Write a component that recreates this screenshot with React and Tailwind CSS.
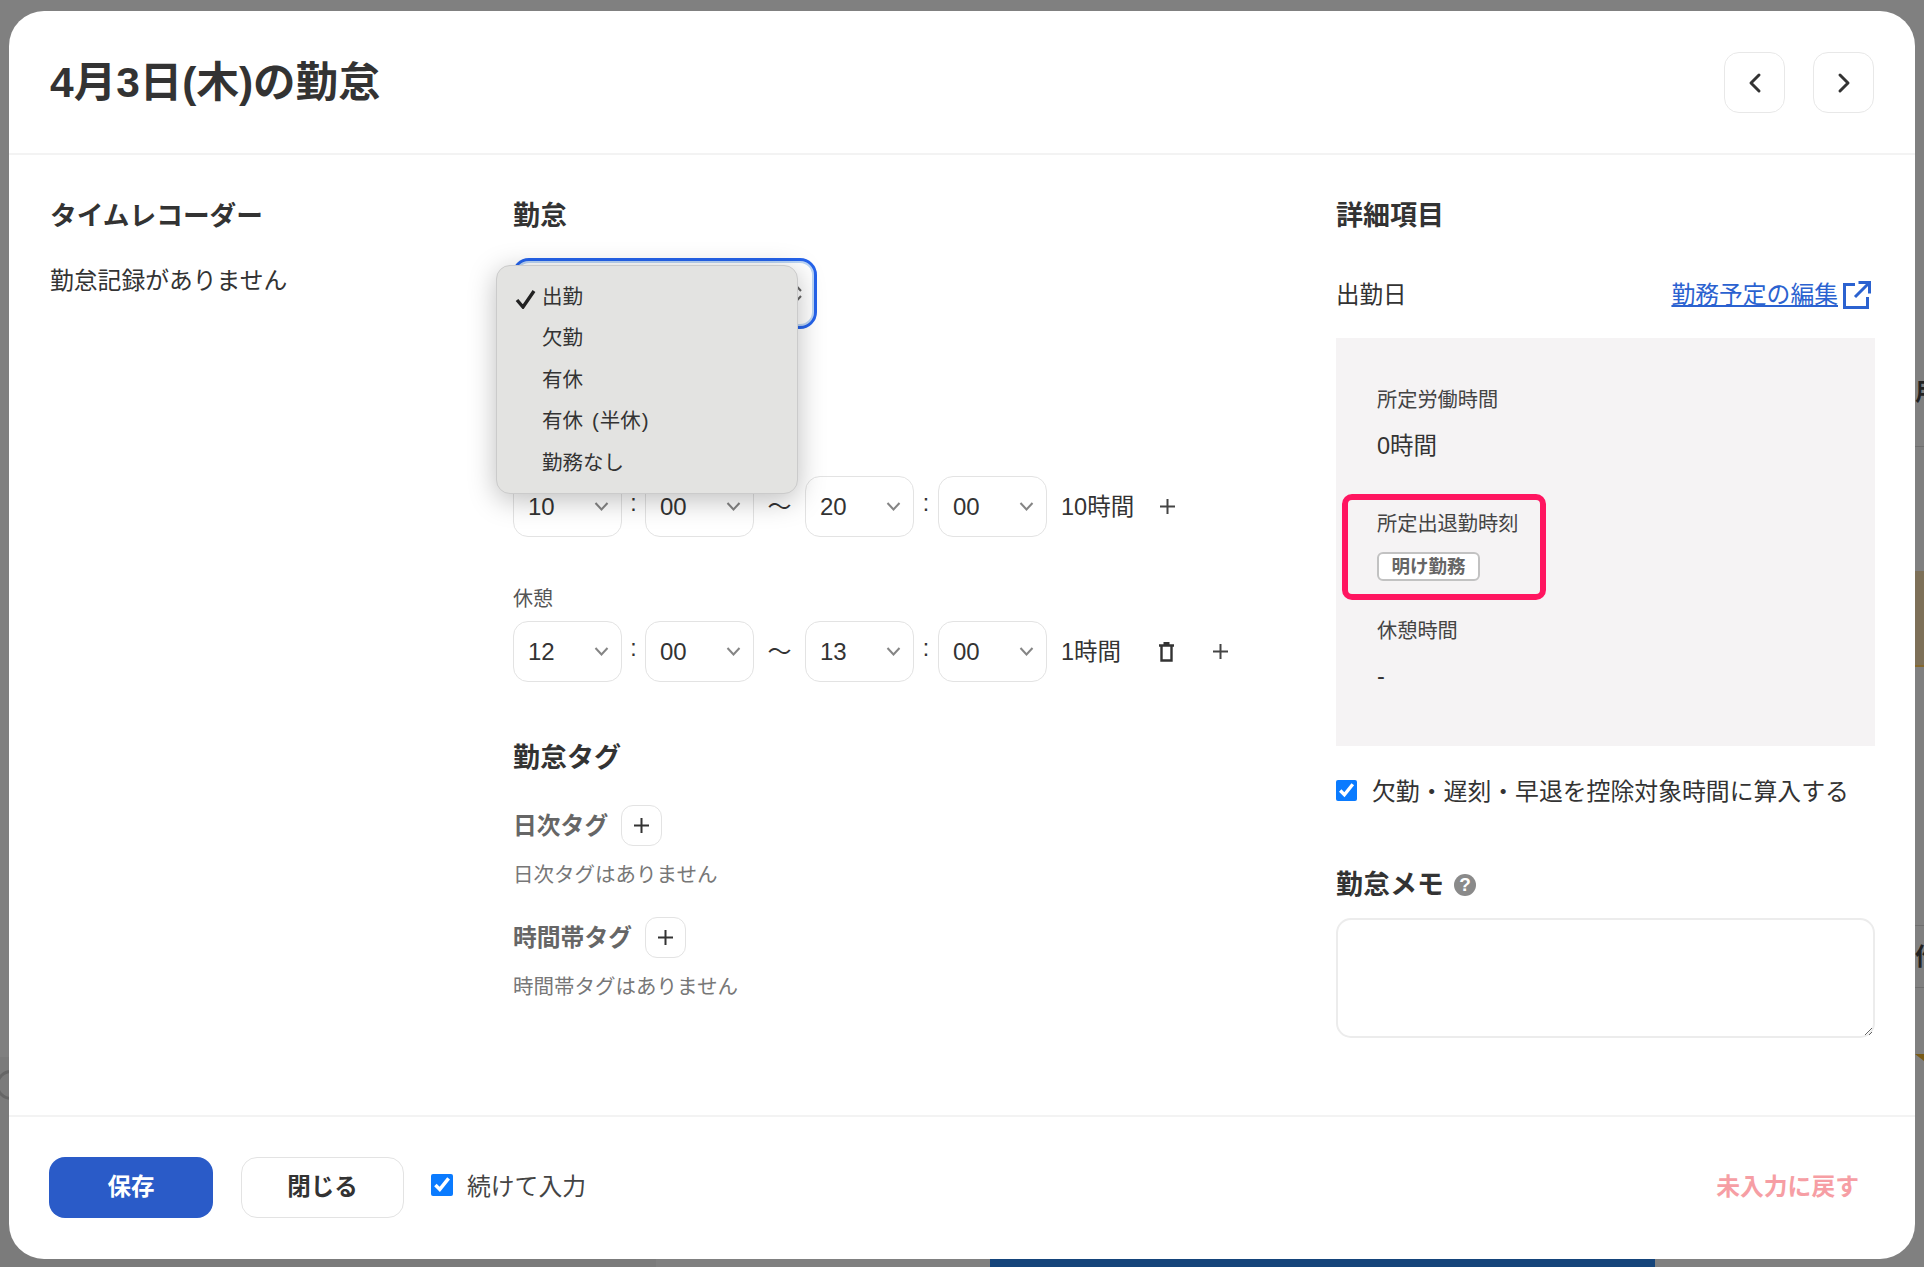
import React from "react";

const FONT = "[font-family:'Liberation_Sans','Noto_Sans_CJK_JP',sans-serif]";

function Chevron() {
  return (
    <svg width="15" height="11" viewBox="0 0 15 11" fill="none" stroke="#858585" strokeWidth="2">
      <path d="M1.5 2 L7.5 8.5 L13.5 2" />
    </svg>
  );
}

function TimeSelect({ value }) {
  return (
    <div className="flex h-[61px] w-[109px] items-center justify-between rounded-[15px] border border-[#e3e3e3] bg-white pl-[14px] pr-[12px] text-[24px] leading-[32px] text-[#333]">
      <span className="pt-px">{value}</span>
      <Chevron />
    </div>
  );
}

function Colon({ w }) {
  return <span className={`${w} pb-[8px] text-center text-[23px] leading-[32px] text-[#333]`}>:</span>;
}

function Plus({ size = 17, color = "#444" }) {
  return (
    <svg width={size} height={size} viewBox="0 0 17 17" fill="none" stroke={color} strokeWidth="2">
      <path d="M8.5 1v15M1 8.5h15" />
    </svg>
  );
}

function TimeRow({ a, b, c, d, children }) {
  return (
    <div className="flex items-center">
      <TimeSelect value={a} />
      <Colon w="w-[23px]" />
      <TimeSelect value={b} />
      <span className="w-[51px] text-center text-[24px] leading-[32px] text-[#333]">〜</span>
      <TimeSelect value={c} />
      <Colon w="w-[24px]" />
      <TimeSelect value={d} />
      {children}
    </div>
  );
}

function TagRow({ label, text, mt }) {
  return (
    <>
      <div className={`flex items-center gap-[13px] ${mt}`}>
        <span className="text-[23.8px] font-bold leading-[32px] text-[#666]">{label}</span>
        <button className="flex h-[41px] w-[41px] items-center justify-center rounded-[12px] border border-[#e3e3e3] bg-white">
          <Plus size={17} color="#333" />
        </button>
      </div>
      <p className="mt-[15px] text-[20.5px] leading-[28px] text-[#777]">{text}</p>
    </>
  );
}

function Nav({ d }) {
  return (
    <button className="flex h-[61px] w-[61px] items-center justify-center rounded-[15px] border border-[#e8e8e8] bg-white">
      <svg width="16" height="22" viewBox="0 0 16 22" fill="none" stroke="#333" strokeWidth="3" strokeLinecap="round" strokeLinejoin="round">
        <path d={d} />
      </svg>
    </button>
  );
}

function Option({ checked, children }) {
  return (
    <div className="relative flex h-[41.5px] items-center pl-[45px] text-[20.5px] leading-[28px] text-[#333]">
      {checked && (
        <svg className="absolute left-[18px] top-[13px]" width="21" height="20" viewBox="0 0 21 20" fill="none" stroke="#222" strokeWidth="3.4">
          <path d="M2 11 L8 18 L19 2" />
        </svg>
      )}
      {children}
    </div>
  );
}

export default function App() {
  return (
    <div className={`relative h-[1267px] w-[1924px] overflow-hidden bg-[#808080] ${FONT}`}>
      {/* page dimmed behind the dialog */}
      <div className="absolute bottom-0 left-0 h-[210px] w-[656px] bg-[#7b7b7b]" />
      <div className="absolute bottom-0 left-[990px] h-[9px] w-[665px] bg-[#15447a]" />
      <div className="absolute left-[-4px] top-[1070px] h-[30px] w-[30px] rounded-full border-[3px] border-[#666]" />
      <div className="absolute left-[1915px] top-[446px] h-px w-[9px] bg-[#6f6f6f]" />
      <div className="absolute left-[1915px] top-[571px] h-[96px] w-[9px] border-b-2 border-[#86692e] bg-[#7d7058]" />
      <div className="absolute left-[1915px] top-[925px] h-px w-[9px] bg-[#6f6f6f]" />
      <div className="absolute left-[1915px] top-[987px] h-px w-[9px] bg-[#6f6f6f]" />
      <svg className="absolute left-[1915px] top-[1054px]" width="9" height="7" viewBox="0 0 9 7">
        <path d="M0 0H9V7Z" fill="#7a5b16" />
      </svg>
      <div className="absolute left-[1915px] top-[378px] text-[24px] font-bold leading-[28px] text-[#222]">用</div>
      <div className="absolute left-[1915px] top-[943px] text-[24px] font-bold leading-[28px] text-[#222]">作</div>

      <div className="relative ml-[9px] mt-[11px] flex h-[1248px] w-[1906px] flex-col overflow-hidden rounded-[35px] bg-white">
        <header className="flex h-[142px] shrink-0 items-center justify-between px-[41px]">
          <h1 className="mt-px text-[42.5px] font-bold leading-[52px] text-[#333]">4月3日(木)の勤怠</h1>
          <div className="mt-px flex gap-[28px]">
            <Nav d="M12 3 L4 11 L12 19" />
            <Nav d="M4 3 L12 11 L4 19" />
          </div>
        </header>

        <main className="flex flex-1 border-y-2 border-[#f3f3f3] pl-[41px] pr-[40px] pt-[41px]">
          <section className="w-[463px] shrink-0">
            <h2 className="text-[26.7px] font-bold leading-[40px] text-[#333]">タイムレコーダー</h2>
            <p className="mt-[29px] text-[23.8px] leading-[32px] text-[#333]">勤怠記録がありません</p>
          </section>

          <section className="w-[823px] shrink-0">
            <h2 className="text-[27px] font-bold leading-[40px] text-[#333]">勤怠</h2>
            <div className="relative -ml-px mt-[22px] h-[71px] w-[305px]">
              <div className="flex h-full items-center justify-end rounded-[17px] border-[3px] border-[#2563eb] pr-[12px] shadow-[inset_0_0_0_2px_#bcd6f5]">
                <svg width="11" height="19" viewBox="0 0 11 19" fill="none" stroke="#666" strokeWidth="2">
                  <path d="M1 7 L5.5 2 L10 7M1 12 L5.5 17 L10 12" />
                </svg>
              </div>
              <div className="absolute left-[-16px] top-[7px] h-[229px] w-[302px] rounded-[14px] border border-[#cbcbcb] bg-[#e3e3e1] pt-[10px] shadow-[0_6px_28px_rgba(0,0,0,0.26)]">
                <Option checked>出勤</Option>
                <Option>欠勤</Option>
                <Option>有休</Option>
                <Option>
                  有休<span className="ml-[9px] mr-px">(</span>半休<span className="ml-px">)</span>
                </Option>
                <Option>勤務なし</Option>
              </div>
            </div>

            <div className="mt-[147px]">
              <TimeRow a="10" b="00" c="20" d="00">
                <span className="ml-[14px] text-[23.5px] leading-[32px] text-[#333]">10時間</span>
                <span className="ml-[25px]"><Plus size={17} color="#444" /></span>
              </TimeRow>
            </div>

            <p className="mt-[48px] text-[20px] leading-[28px] text-[#555]">休憩</p>
            <div className="mt-[8px]">
              <TimeRow a="12" b="00" c="13" d="00">
                <span className="ml-[14px] text-[23.5px] leading-[32px] text-[#333]">1時間</span>
                <svg className="ml-[37px]" width="17" height="20" viewBox="0 0 17 20" fill="none" stroke="#333" strokeWidth="2.4">
                  <path d="M1 3.5h15M5.5 1.2h6M3.5 3.5V18.5h10V3.5" />
                </svg>
                <span className="ml-[37px]"><Plus size={17} color="#444" /></span>
              </TimeRow>
            </div>

            <h2 className="mt-[56px] text-[27px] font-bold leading-[40px] text-[#333]">勤怠タグ</h2>
            <TagRow label="日次タグ" text="日次タグはありません" mt="mt-[27px]" />
            <TagRow label="時間帯タグ" text="時間帯タグはありません" mt="mt-[28px]" />
          </section>

          <section className="w-[539px] shrink-0">
            <h2 className="text-[27px] font-bold leading-[40px] text-[#333]">詳細項目</h2>
            <div className="mt-[43px] flex items-center justify-between pr-[4px]">
              <span className="text-[23.5px] leading-[32px] text-[#333]">出勤日</span>
              <a className="flex items-center gap-[5px] text-[23.8px] leading-[32px] text-[#2b62d0] underline">
                勤務予定の編集
                <svg width="28" height="28" viewBox="0 0 28 28" fill="none" stroke="#2b62d0" strokeWidth="3">
                  <path d="M12 3.5H1.5v23h23V16M12 16 L26 2M15.5 1.5h11v11" />
                </svg>
              </a>
            </div>

            <div className="mt-[27px] h-[408px] bg-[#f5f3f4] pl-[41px] pt-[48px]">
              <p className="text-[20.2px] leading-[28px] text-[#444]">所定労働時間</p>
              <p className="mt-[16px] text-[23.5px] leading-[32px] text-[#333]">0時間</p>
              <div className="relative mt-[48px]">
                <p className="text-[20.2px] leading-[28px] text-[#444]">所定出退勤時刻</p>
                <span className="mt-[14px] flex h-[29px] w-[103px] items-center justify-center rounded-[6px] border-2 border-[#c2c2c2] bg-white text-[18.5px] font-bold leading-[24px] text-[#666]">
                  明け勤務
                </span>
                <div className="absolute left-[-35px] top-[-16px] h-[106px] w-[204px] rounded-[10px] border-[6px] border-[#ff1560]" />
              </div>
              <p className="mt-[36px] text-[20.2px] leading-[28px] text-[#444]">休憩時間</p>
              <p className="mt-[15px] text-[23.5px] leading-[32px] text-[#333]">-</p>
            </div>

            <label className="mt-[30px] flex items-center gap-[15px]">
              <input type="checkbox" checked readOnly className="-mt-[4px] h-[21px] w-[21px] accent-[#0a7bff]" />
              <span className="text-[23.85px] leading-[32px] text-[#333]">欠勤・遅刻・早退を控除対象時間に算入する</span>
            </label>

            <div className="mt-[57px] flex items-center gap-[10px]">
              <h2 className="text-[27px] font-bold leading-[40px] text-[#333]">勤怠メモ</h2>
              <span className="flex h-[22px] w-[22px] items-center justify-center rounded-full bg-[#8a8a8a] text-[19px] font-bold leading-[22px] text-white">?</span>
            </div>
            <textarea className="mt-[13px] block h-[120px] w-[539px] resize-y rounded-[15px] border-2 border-[#ececec] bg-white" />
          </section>
        </main>

        <footer className="flex h-[142px] shrink-0 items-center pb-[2px] pl-[40px] pr-[56px]">
          <button className="flex h-[61px] w-[164px] items-center justify-center rounded-[16px] bg-[#2a5bc8] text-[23.5px] font-bold leading-[32px] text-white">保存</button>
          <button className="ml-[28px] flex h-[61px] w-[163px] items-center justify-center rounded-[16px] border border-[#e3e3e3] bg-white text-[23.5px] font-bold leading-[32px] text-[#333]">閉じる</button>
          <label className="ml-[27px] flex items-center gap-[14px]">
            <input type="checkbox" checked readOnly className="-mt-[4px] h-[22px] w-[22px] accent-[#0a7bff]" />
            <span className="text-[23.8px] leading-[32px] text-[#444]">続けて入力</span>
          </label>
          <button className="ml-auto text-[23.8px] font-bold leading-[32px] text-[#f69ea4]">未入力に戻す</button>
        </footer>
      </div>
    </div>
  );
}
